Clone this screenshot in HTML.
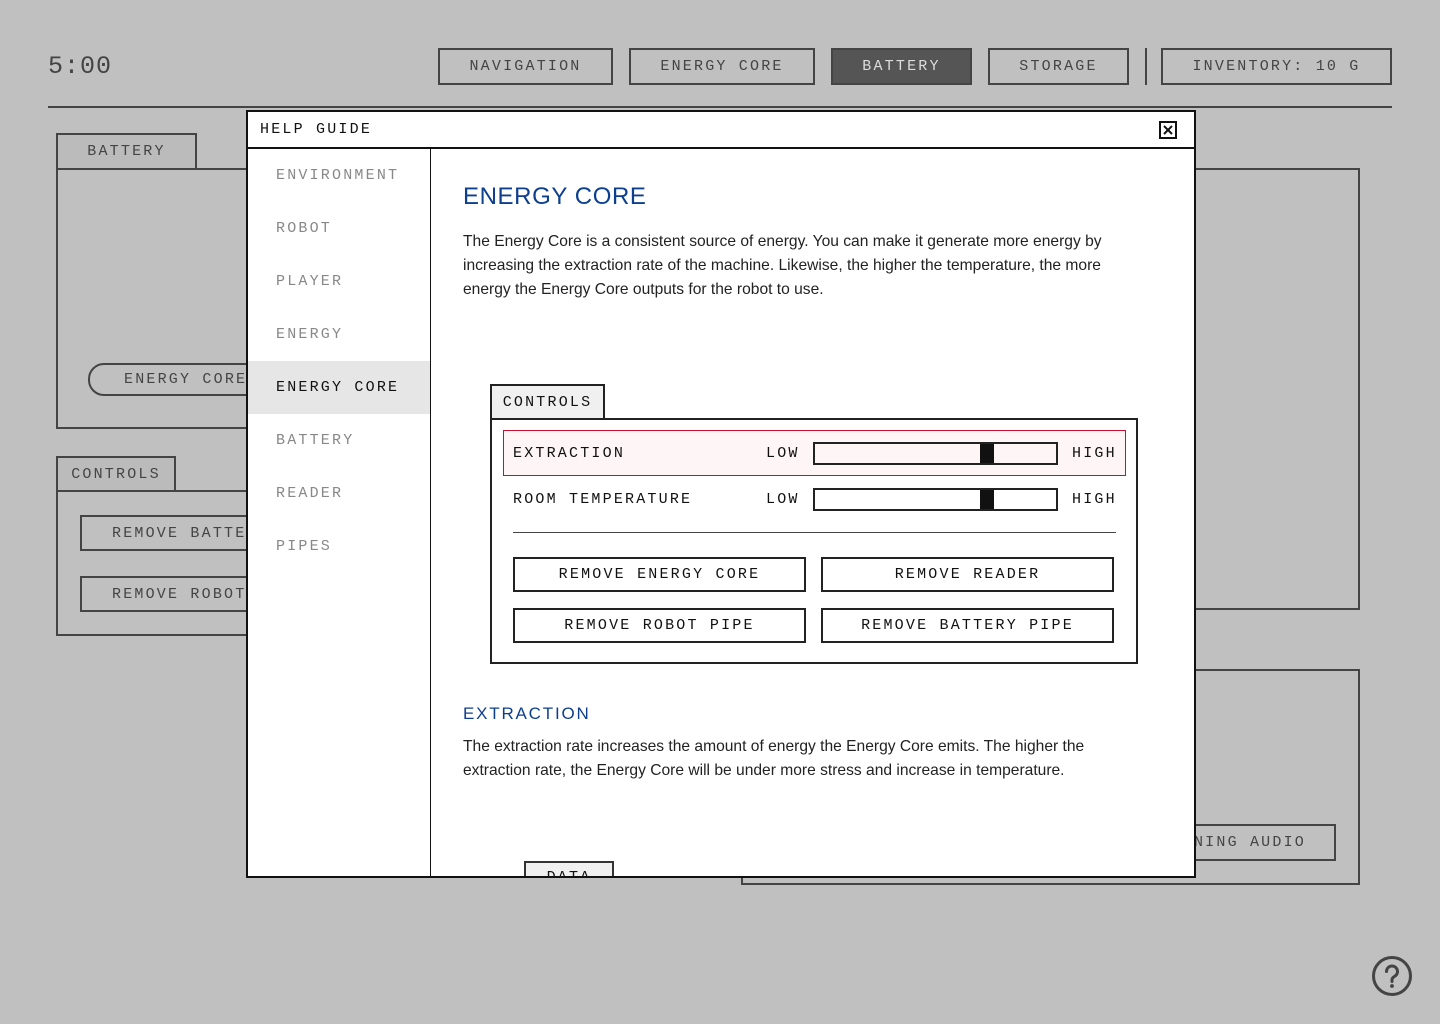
<!DOCTYPE html>
<html><head><meta charset="utf-8"><style>
*{box-sizing:border-box;margin:0;padding:0}
body{width:1440px;height:1024px;background:#c0c0c0;position:relative;overflow:hidden;font-family:"Liberation Mono",monospace;color:#444}
.a{position:absolute}
.m{font-family:"Liberation Mono",monospace;font-size:15px;letter-spacing:2.2px;white-space:nowrap}
.b{position:absolute;border:2px solid #444;display:flex;align-items:center;justify-content:center}
.s{font-family:"Liberation Sans",sans-serif}
</style></head><body>
<div class="a m" style="left:48px;top:52px;font-size:25px;letter-spacing:1px;color:#444">5:00</div>
<div class="b m" style="left:438px;top:48px;width:175px;height:37px">NAVIGATION</div>
<div class="b m" style="left:629px;top:48px;width:186px;height:37px">ENERGY CORE</div>
<div class="b m" style="left:831px;top:48px;width:141px;height:37px;background:#555;color:#ddd">BATTERY</div>
<div class="b m" style="left:988px;top:48px;width:141px;height:37px">STORAGE</div>
<div class="a" style="left:1145px;top:48px;width:2px;height:37px;background:#444"></div>
<div class="b m" style="left:1161px;top:48px;width:231px;height:37px">INVENTORY: 10 G</div>
<div class="a" style="left:48px;top:106px;width:1344px;height:2px;background:#444"></div>

<div class="b m" style="left:56px;top:133px;width:141px;height:37px;background:#bbb">BATTERY</div>
<div class="a" style="left:56px;top:168px;width:300px;height:261px;border:2px solid #444"></div>
<div class="a" style="left:1000px;top:168px;width:360px;height:442px;border:2px solid #444"></div>
<div class="b m" style="left:88px;top:363px;width:220px;height:33px;border-radius:16px 0 0 16px;justify-content:flex-start;padding-left:34px">ENERGY CORE</div>
<div class="b m" style="left:56px;top:456px;width:120px;height:36px;background:#bbb">CONTROLS</div>
<div class="a" style="left:56px;top:490px;width:300px;height:146px;border:2px solid #444"></div>
<div class="b m" style="left:80px;top:515px;width:260px;height:36px;justify-content:flex-start;padding-left:30px">REMOVE BATTERY</div>
<div class="b m" style="left:80px;top:576px;width:260px;height:36px;justify-content:flex-start;padding-left:30px">REMOVE ROBOT</div>
<div class="a" style="left:741px;top:669px;width:619px;height:216px;border:2px solid #444"></div>
<div class="b m" style="left:1100px;top:824px;width:236px;height:37px;justify-content:flex-end;padding-right:28px">LISTENING AUDIO</div>
<svg class="a" style="left:1371px;top:955px" width="42" height="42" viewBox="0 0 42 42"><circle cx="21" cy="21" r="18.5" fill="none" stroke="#444" stroke-width="3"/><path d="M15.5 16.5a5.5 5.5 0 1 1 8 4.9c-1.6.9-2.5 1.9-2.5 3.6v1.5" fill="none" stroke="#444" stroke-width="3" stroke-linecap="round"/><circle cx="21" cy="31" r="1.9" fill="#444"/></svg>

<div class="a" style="left:246px;top:110px;width:950px;height:768px;background:#fff;border:2px solid #111;overflow:hidden">
<div class="a" style="left:-2px;top:-2px;width:950px;height:768px">
 <div class="a m" style="left:14px;top:11px;color:#111">HELP GUIDE</div>
 <div class="a" style="left:913px;top:11px;width:18px;height:18px;border:2px solid #111"><svg width="14" height="14" style="display:block"><path d="M3 3L11 11M11 3L3 11" stroke="#111" stroke-width="2"/></svg></div>
 <div class="a" style="left:0;top:37px;width:948px;height:2px;background:#111"></div>
 <div class="a" style="left:184px;top:39px;width:1px;height:730px;background:#111"></div>
 <div class="a m" style="left:30px;top:57px;color:#888">ENVIRONMENT</div>
 <div class="a m" style="left:30px;top:110px;color:#888">ROBOT</div>
 <div class="a m" style="left:30px;top:163px;color:#888">PLAYER</div>
 <div class="a m" style="left:30px;top:216px;color:#888">ENERGY</div>
 <div class="a" style="left:0;top:251px;width:184px;height:53px;background:#e6e6e6"></div>
 <div class="a m" style="left:30px;top:269px;color:#111">ENERGY CORE</div>
 <div class="a m" style="left:30px;top:322px;color:#888">BATTERY</div>
 <div class="a m" style="left:30px;top:375px;color:#888">READER</div>
 <div class="a m" style="left:30px;top:428px;color:#888">PIPES</div>

 <div class="a s" style="left:217px;top:73px;font-size:24px;letter-spacing:0.6px;color:#0d3f8f">ENERGY CORE</div>
 <div class="a s" style="left:217px;top:120px;width:680px;font-size:15.6px;line-height:24px;color:#222">The Energy Core is a consistent source of energy. You can make it generate more energy by increasing the extraction rate of the machine. Likewise, the higher the temperature, the more energy the Energy Core outputs for the robot to use.</div>

 <div class="b m" style="left:244px;top:274px;width:115px;height:36px;background:#f0f0f0;color:#111;border-color:#222">CONTROLS</div>
 <div class="a" style="left:244px;top:308px;width:648px;height:246px;border:2px solid #222"></div>
 <div class="a" style="left:257px;top:320px;width:623px;height:46px;border:1.5px solid #c8102e;background:#fdf5f6"></div>
 <div class="a m" style="left:267px;top:335px;color:#111">EXTRACTION</div>
 <div class="a m" style="left:520px;top:335px;color:#111">LOW</div>
 <div class="a" style="left:567px;top:332px;width:245px;height:23px;border:2px solid #222"><div class="a" style="left:165px;top:0;width:14px;height:19px;background:#111"></div></div>
 <div class="a m" style="left:826px;top:335px;color:#111">HIGH</div>
 <div class="a m" style="left:267px;top:381px;color:#111">ROOM TEMPERATURE</div>
 <div class="a m" style="left:520px;top:381px;color:#111">LOW</div>
 <div class="a" style="left:567px;top:378px;width:245px;height:23px;border:2px solid #222"><div class="a" style="left:165px;top:0;width:14px;height:19px;background:#111"></div></div>
 <div class="a m" style="left:826px;top:381px;color:#111">HIGH</div>
 <div class="a" style="left:267px;top:422px;width:603px;height:1px;background:#444"></div>
 <div class="b m" style="left:267px;top:447px;width:293px;height:35px;color:#111;border-color:#222">REMOVE ENERGY CORE</div>
 <div class="b m" style="left:575px;top:447px;width:293px;height:35px;color:#111;border-color:#222">REMOVE READER</div>
 <div class="b m" style="left:267px;top:498px;width:293px;height:35px;color:#111;border-color:#222">REMOVE ROBOT PIPE</div>
 <div class="b m" style="left:575px;top:498px;width:293px;height:35px;color:#111;border-color:#222">REMOVE BATTERY PIPE</div>

 <div class="a s" style="left:217px;top:594px;font-size:17px;letter-spacing:1.8px;color:#0d3f8f">EXTRACTION</div>
 <div class="a s" style="left:217px;top:625px;width:680px;font-size:15.6px;line-height:24px;color:#222">The extraction rate increases the amount of energy the Energy Core emits. The higher the extraction rate, the Energy Core will be under more stress and increase in temperature.</div>
 <div class="a m" style="left:278px;top:751px;width:90px;height:30px;border:2px solid #333;background:#f0f0f0;color:#111;text-align:center;padding-top:6px">DATA</div>
</div>
</div>
</body></html>
